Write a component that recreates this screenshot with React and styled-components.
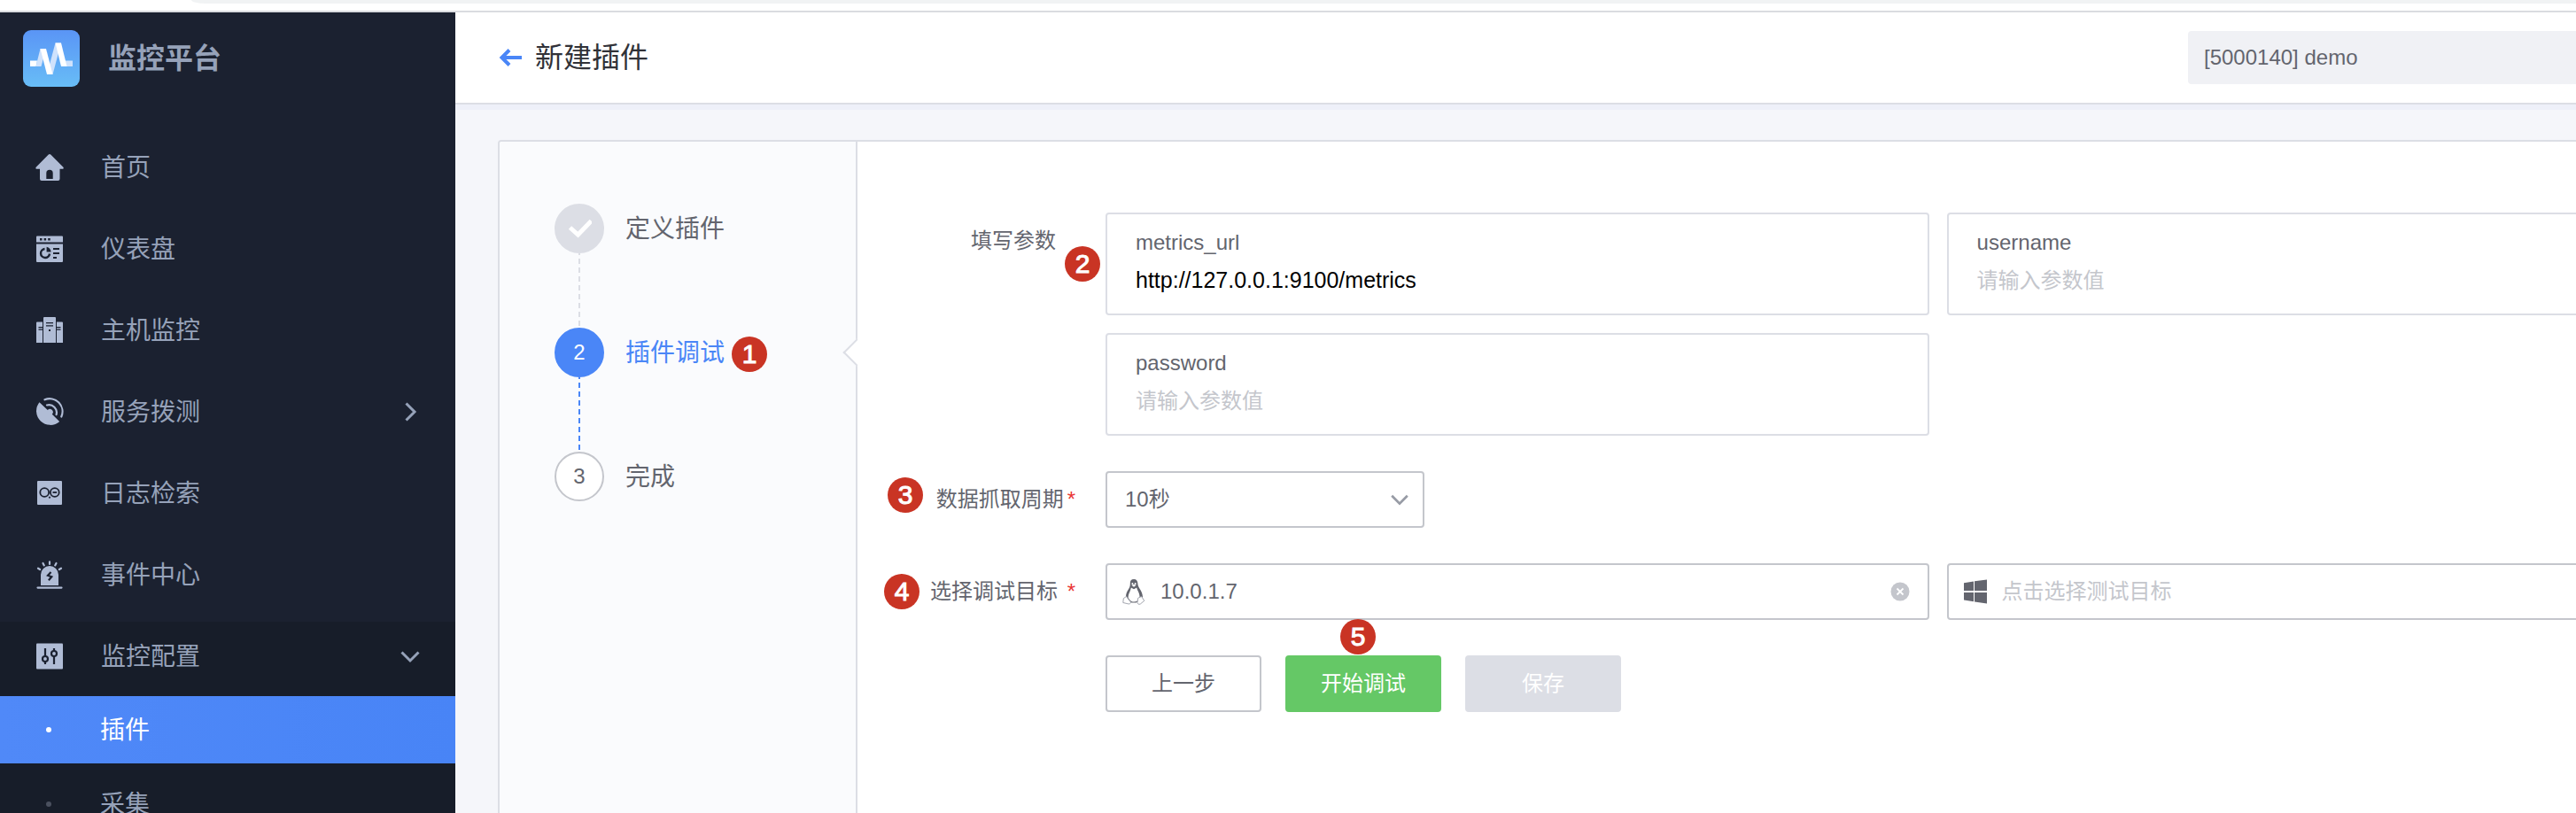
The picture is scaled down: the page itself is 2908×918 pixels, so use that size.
import React from "react";
import styled, { createGlobalStyle, css } from "styled-components";

const sans = '"Liberation Sans", "Noto Sans CJK SC", sans-serif';

const GlobalStyle = createGlobalStyle`
  *, *::before, *::after { box-sizing: border-box; }
  body {
    margin: 0;
    background: #fff;
    color: #63656e;
    font-family: ${sans};
    font-size: 24px;
    line-height: 32px;
  }
  button, input, select { font: inherit; color: inherit; margin: 0; }
  a { color: inherit; text-decoration: none; }
  svg { display: block; flex: none; }
`;

const Page = styled.div`
  display: flex;
  flex-direction: column;
  height: 100vh;
  overflow: hidden;
`;

const BrowserEdge = styled.div`
  flex: none;
  height: 14px;
  padding-left: 216px;
  border-bottom: 2px solid #dadce0;
  background: #fff;
`;

const AddressBar = styled.div`
  height: 4px;
  border-bottom-left-radius: 16px 4px;
  background: #f1f3f4;
`;

const Shell = styled.div`
  display: flex;
  flex: 1;
  min-height: 0;
`;

/* ---------- sidebar ---------- */

const Sidebar = styled.aside`
  flex: none;
  width: 514px;
  overflow: hidden;
  background: #1b2130;
  color: #96a2b9;
  font-size: 28px;
  line-height: 40px;
`;

const Brand = styled.div`
  display: flex;
  align-items: center;
  gap: 32px;
  height: 104px;
  padding-left: 26px;
  font-size: 32px;
  font-weight: 700;
`;

const Nav = styled.nav`
  padding-top: 24px;
`;

const navRow = css`
  display: flex;
  align-items: center;
  width: 100%;
  gap: 42px;
  padding: 0 38px 0 40px;
  border: 0;
  background: none;
  text-align: left;
`;

const navItem = css`
  ${navRow}
  height: 84px;
  padding-bottom: 6px;
`;

const NavLink = styled.a`
  ${navItem}
  margin-top: 8px;
`;

const NavToggle = styled.button`
  ${navItem}
  margin-top: ${(p) => (p.$flush ? 0 : "8px")};
`;

const NavText = styled.span`
  flex: 1;
  padding-top: 2px;
`;

const NavGroup = styled.div`
  margin-top: 8px;
  padding-bottom: 8px;
  background: #171d29;
`;

const SubLink = styled.a`
  ${navRow}
  height: 76px;
  margin-bottom: 8px;
  ${(p) =>
    p.$active &&
    css`
      background: linear-gradient(90deg, #5089f8, #4884f6);
      color: #fff;
    `}
`;

const SubDot = styled.span`
  flex: none;
  width: 6px;
  height: 6px;
  margin: 0 13px 0 12px;
  border-radius: 50%;
  background: ${(p) => (p.$active ? "#fff" : "#4a505e")};
`;

/* ---------- main area ---------- */

const Main = styled.main`
  display: flex;
  flex: 1;
  flex-direction: column;
  min-width: 0;
  background: #f5f6fa;
`;

const Header = styled.header`
  display: flex;
  flex: none;
  align-items: center;
  height: 104px;
  padding-left: 48px;
  border-bottom: 2px solid #dcdee5;
  background: #fff;
  box-shadow: 0 6px 0 #eef0f9;
`;

const BackLink = styled.a`
  display: flex;
  margin-right: 14px;
`;

const Title = styled.h1`
  flex: 1;
  margin: 0;
  color: #313238;
  font-size: 32px;
  font-weight: 400;
  line-height: 40px;
`;

const SpaceSelect = styled.select`
  width: 438px;
  height: 60px;
  padding: 0 18px;
  border: 0;
  border-radius: 4px 0 0 4px;
  background: #f0f1f5;
  appearance: none;
`;

const Card = styled.section`
  display: flex;
  flex: 1;
  min-height: 0;
  margin: 40px 0 0 48px;
  border: 2px solid #dcdee5;
  border-width: 2px 0 0 2px;
  border-top-left-radius: 4px;
  background: #fff;
  overflow: hidden;
`;

const StepsPane = styled.div`
  flex: none;
  width: 402px;
  padding: 70px 0 0 62px;
  background: #fafbfd;
`;

const StepList = styled.ol`
  display: flex;
  flex-direction: column;
  margin: 0;
  padding: 0;
  list-style: none;
`;

const Step = styled.li`
  position: relative;
  display: flex;
  gap: 24px;
  color: ${(p) => (p.$state === "active" ? "#4a86f7" : "#63656e")};
`;

const StepRail = styled.div`
  display: flex;
  flex-direction: column;
  align-items: center;
`;

const StepMark = styled.span`
  display: flex;
  align-items: center;
  justify-content: center;
  width: 56px;
  height: 56px;
  border: 2px solid #c4c6cc;
  border-radius: 50%;
  background: #fff;
  ${(p) =>
    p.$state === "done" &&
    css`
      border-color: #dcdee5;
      background: #dcdee5;
    `}
  ${(p) =>
    p.$state === "active" &&
    css`
      border-color: #4a86f7;
      background: #4a86f7;
      color: #fff;
    `}
`;

const StepLine = styled.span`
  width: 2px;
  height: 84px;
  background: repeating-linear-gradient(
    ${(p) => (p.$state === "active" ? "#4a86f7" : "#dcdee5")} 0 2px,
    transparent 2px 6px,
    ${(p) => (p.$state === "active" ? "#4a86f7" : "#dcdee5")} 6px 10px
  );
`;

const StepLabel = styled.span`
  position: relative;
  height: 56px;
  font-size: 28px;
  line-height: 58px;
`;

const Notch = styled.span`
  position: absolute;
  top: 17px;
  right: -12px;
  width: 22px;
  height: 22px;
  border: 2px solid #dcdee5;
  border-width: 0 0 2px 2px;
  background: #fff;
  transform: rotate(45deg);
`;

/* numbered call-outs lying over the form */
const Callout = styled.span`
  position: absolute;
  top: ${(p) => p.$top};
  left: ${(p) => p.$left};
  width: 40px;
  height: 40px;
  border-radius: 50%;
  background: #c93424;
  color: #fff;
  font-size: 30px;
  -webkit-text-stroke: 1px #fff;
  line-height: 40px;
  text-align: center;
`;

const Form = styled.form`
  display: flex;
  flex: 1;
  flex-direction: column;
  gap: 40px;
  min-width: 0;
  padding-top: 80px;
  border-left: 2px solid #dcdee5;
`;

const Row = styled.div`
  display: flex;
`;

const RowLabel = styled.label`
  position: relative;
  flex: none;
  width: 280px;
  padding-right: ${(p) => (p.$required ? "34px" : "56px")};
  line-height: 64px;
  text-align: right;
  white-space: pre;
`;

const Star = styled.span`
  margin-left: 4px;
  color: #ea3636;
`;

const FieldGrid = styled.div`
  display: grid;
  flex: 1;
  grid-template-columns: 56% 56%;
  gap: 20px;
  min-width: 0;
`;

const ParamBox = styled.label`
  display: flex;
  flex-direction: column;
  gap: 10px;
  padding: 16px 32px 22px;
  border: 2px solid #dcdee5;
  border-radius: 4px;
`;

const bareInput = css`
  width: 100%;
  min-width: 0;
  height: 32px;
  padding: 0;
  border: 0;
  outline: 0;
  background: none;
  &::placeholder {
    color: #c4c6cc;
    font-size: 24px;
    opacity: 1;
  }
`;

const ParamInput = styled.input`
  ${bareInput}
  color: #000;
  font-size: 25px;
`;

const SelectWrap = styled.div`
  display: grid;
  align-items: center;
  width: 360px;
  & > * { grid-area: 1 / 1; }
  & > svg {
    justify-self: end;
    margin-right: 16px;
    pointer-events: none;
  }
`;

const PeriodSelect = styled.select`
  width: 100%;
  height: 64px;
  padding: 0 20px;
  border: 2px solid #c4c6cc;
  border-radius: 4px;
  background: #fff;
  appearance: none;
`;

const TargetBox = styled.div`
  display: flex;
  align-items: center;
  gap: 16px;
  height: 64px;
  padding: 0 20px 0 16px;
  border: 2px solid #c4c6cc;
  border-radius: 4px;
`;

const TargetInput = styled.input`
  ${bareInput}
`;

const ClearButton = styled.button`
  display: flex;
  padding: 0;
  border: 0;
  background: none;
`;

const Actions = styled.div`
  position: relative;
  display: flex;
  gap: 27px;
  padding-left: 280px;
`;

const Button = styled.button`
  width: 176px;
  height: 64px;
  padding: 0;
  border: 2px solid #c4c6cc;
  border-radius: 4px;
  background: #fff;
  ${(p) =>
    p.$kind === "success" &&
    css`
      border-color: #65c866;
      background: #65c866;
      color: #fff;
    `}
  &:disabled {
    border-color: #dcdee5;
    background: #dcdee5;
    color: #fff;
  }
`;

/* ---------- drawings ---------- */

const INK = "#b0bcd5";
const HOLE = "#1b2130";

const Logo = () => (
  <svg width="64" height="64" viewBox="0 0 64 64" aria-hidden="true">
    <defs>
      <linearGradient id="logo-bg" x1="0" y1="0" x2="0" y2="1">
        <stop offset="0" stopColor="#5a95f6" />
        <stop offset="1" stopColor="#68bdf6" />
      </linearGradient>
    </defs>
    <rect width="64" height="64" rx="9" fill="url(#logo-bg)" />
    <path d="M14.500 41 19.500 21H26L20.500 41Z" fill="#cfe2fc" />
    <path d="M27 50 36.500 14.500H43L33.500 50Z" fill="#cfe2fc" />
    <path d="M43 34.500H56V41H43Z" fill="#cfe2fc" />
    <path d="M8 34.500H16L14.500 41H8Z" fill="#fff" />
    <path d="M19.500 21H26L33.500 50H27Z" fill="#fff" />
    <path d="M36.500 14.500H43L49.500 41H43Z" fill="#fff" />
  </svg>
);

const Icon = ({ children }) => (
  <svg width="32" height="32" viewBox="0 0 32 32" fill={INK} aria-hidden="true">
    {children}
  </svg>
);

const HomeIcon = () => (
  <Icon>
    <path d="M14.800 1.500a1.700 1.700 0 0 1 2.400 0L31.400 15.800c.7.800.3 1.900-.8 1.900H27.500V29a2 2 0 0 1-2 2h-18.500a2 2 0 0 1-2-2V17.700H1.500C.4 17.700 0 16.600.7 15.800Z" />
    <path d="M12.300 29V22.500a3.700 3.700 0 0 1 7.400 0V29Z" fill={HOLE} />
  </Icon>
);

const DashboardIcon = () => (
  <Icon>
    <path d="M2 1.500h28a1 1 0 0 1 1 1V8.500H1V2.500a1 1 0 0 1 1-1ZM1 10.500H31V30a1 1 0 0 1-1 1H2a1 1 0 0 1-1-1Z" />
    <path d="M5 4h2.500v2.500H5ZM9.600 4h2.500v2.500H9.600ZM14.200 4h2.500v2.500h-2.500Z" fill={HOLE} />
    <path d="M10.500 16a5 5 0 1 0 5.500 5.500" fill="none" stroke={HOLE} strokeWidth="2.400" />
    <path d="M12.600 13.800a6.500 6.500 0 0 1 5 5.800h-5ZM20 15h7v2h-7ZM20 20h7v2h-7ZM20 25h4v2h-4Z" fill={HOLE} />
  </Icon>
);

const HostIcon = () => (
  <Icon>
    <path d="M10 1h12a1 1 0 0 1 1 1V30H9V2a1 1 0 0 1 1-1ZM2 6.500h6V30H1V7.500a1 1 0 0 1 1-1ZM24 6.500h6a1 1 0 0 1 1 1V30h-7Z" />
    <path d="M12 7h8v1.300h-8ZM12 10.200h8v1.300h-8ZM15 15h2v2h-2ZM3.500 12h4.500v1.200H3.500ZM3.500 14.600h4.500v1.200H3.500ZM24 12h4.500v1.200H24ZM24 14.600h4.500v1.200H24Z" fill={HOLE} />
  </Icon>
);

const RadarIcon = () => (
  <Icon>
    <path d="M4.500 5.200 13.800 14a3.400 3.400 0 0 1 5 4.700l8.400 8.300A15.800 15.800 0 0 1 4.500 5.200Z" />
    <path d="M10.500 2.300A14.500 14.500 0 0 1 29.300 21.500M13 8.500a8.600 8.600 0 0 1 10.600 10.600" fill="none" stroke={INK} strokeWidth="2.200" strokeLinecap="round" />
  </Icon>
);

const LogIcon = () => (
  <Icon>
    <rect x="2" y="2" width="28" height="27" rx="1" />
    <g fill="none" stroke={HOLE} strokeWidth="1.800">
      <circle cx="10.200" cy="15" r="4.900" />
      <circle cx="21.800" cy="15" r="4.900" />
      <path d="M19.500 15h4.600" />
    </g>
    <path d="M16 19.300 17.300 20.700 16 22 14.700 20.700Z" fill={HOLE} />
  </Icon>
);

const AlarmIcon = () => (
  <Icon>
    <path d="M6 28V16a10 10 0 0 1 20 0V28ZM2.500 29.500h27a1 1 0 0 1 0 2.200h-27a1 1 0 0 1 0-2.200Z" />
    <path d="M16 1.400v2.500M8.500 3l1.300 2.400M23.500 3l-1.300 2.400M3 8.700l2.200 1.300M29 8.700 26.800 10" stroke={INK} strokeWidth="2.200" strokeLinecap="round" />
    <path d="M17.500 13 14 16.700l4.300 1.600-3.400 4" fill="none" stroke={HOLE} strokeWidth="2.200" />
  </Icon>
);

const ConfigIcon = () => (
  <Icon>
    <rect x="1" y="1.500" width="30" height="29" rx="1" />
    <g fill="none" stroke={HOLE} strokeWidth="2.200">
      <circle cx="11" cy="19" r="3" />
      <circle cx="21" cy="13" r="3" />
      <path d="M11 7v9M11 22v3M21 7v3M21 16v9" />
    </g>
  </Icon>
);

const Chevron = ({ down, color = "#96a2b9", size = 26, stroke = 3 }) => (
  <svg width={size} height={size} viewBox="0 0 26 26" fill="none" stroke={color} strokeWidth={stroke} aria-hidden="true">
    <path d={down ? "M3.500 8.500 13 18l9.500-9.500" : "M8.500 3.500 18 13l-9.500 9.500"} />
  </svg>
);

const BackArrow = () => (
  <svg width="28" height="28" viewBox="0 0 28 28" fill="none" stroke="#4a86f7" strokeWidth="4" aria-hidden="true">
    <path d="M27 14H5M13 5.500 4.500 14 13 22.500" />
  </svg>
);

const CheckMark = () => (
  <svg width="28" height="28" viewBox="0 0 28 28" fill="none" stroke="#fff" strokeWidth="5" aria-hidden="true">
    <path d="M3.500 13 12.500 21 27.500 5.500" />
  </svg>
);

const LinuxIcon = () => (
  <svg width="28" height="32" viewBox="0 0 28 32" aria-hidden="true">
    <path d="M9.800 7.500C9.600 3.800 11 2 14 2s4.400 2 4.400 5c0 4.500 5.300 8 5.600 15l-3 3.500-4.500 3h-5L6.500 24.500 5 21.500C5.300 15 10 12.500 9.800 7.500Z" fill="#63656e" />
    <path d="M10.800 11.500 14 13.200l3.200-1.700c.8 3.800 3.800 6.500 3.300 11.500-1.200 3.300-3.600 4.600-6.500 4.600-3.300 0-5-2.500-6.300-4.600-.3-4.500 2.500-7 3.100-11.500Z" fill="#fff" />
    <path d="M11.300 8.800 14 7.800l2.700 1-2.700 2Z" fill="#fff" />
    <circle cx="12.400" cy="7" r="1" fill="#fff" />
    <circle cx="15.600" cy="7" r="1" fill="#fff" />
    <path d="M5.500 21.500 10.500 28c0 1.600-1.600 2.400-3.600 1.700L1.800 28.500l.5-4.800ZM22.500 21.500l3.300 4.800-4.500 3.700c-1.800.8-3.300 0-3.300-1.700l.7-5Z" fill="#fff" stroke="#979ba5" strokeWidth=".9" />
  </svg>
);

const WindowsIcon = () => (
  <svg width="28" height="28" viewBox="0 0 28 28" fill="#63656e" aria-hidden="true">
    <path d="M1 4.300 12 2.500V13H1ZM13 2.300 27 .5V13H13ZM1 15H12V25.300L1 23.500ZM13 15H27V27.500L13 25.500Z" />
  </svg>
);

const ClearIcon = () => (
  <svg width="22" height="22" viewBox="0 0 22 22" aria-hidden="true">
    <circle cx="11" cy="11" r="10.500" fill="#c4c6cc" />
    <path d="M7.500 7.500 14.500 14.500M14.500 7.500 7.500 14.500" stroke="#fff" strokeWidth="1.800" />
  </svg>
);

/* ---------- data ---------- */

const navItems = [
  { text: "首页", icon: HomeIcon },
  { text: "仪表盘", icon: DashboardIcon },
  { text: "主机监控", icon: HostIcon },
  { text: "服务拨测", icon: RadarIcon, expandable: true },
  { text: "日志检索", icon: LogIcon },
  { text: "事件中心", icon: AlarmIcon },
];

const steps = [
  { label: "定义插件", state: "done" },
  { label: "插件调试", state: "active" },
  { label: "完成", state: "todo" },
];

const params = [
  { name: "metrics_url", value: "http://127.0.0.1:9100/metrics" },
  { name: "username" },
  { name: "password" },
];

export default function App() {
  return (
    <>
      <GlobalStyle />
      <Page>
        <BrowserEdge>
          <AddressBar />
        </BrowserEdge>
        <Shell>
          <Sidebar>
            <Brand>
              <Logo />
              <span>监控平台</span>
            </Brand>
            <Nav>
              {navItems.map(({ text, icon: Glyph, expandable }) =>
                expandable ? (
                  <NavToggle key={text} type="button" aria-expanded="false">
                    <Glyph />
                    <NavText>{text}</NavText>
                    <Chevron />
                  </NavToggle>
                ) : (
                  <NavLink key={text} href="#">
                    <Glyph />
                    <NavText>{text}</NavText>
                  </NavLink>
                )
              )}
              <NavGroup>
                <NavToggle type="button" aria-expanded="true" $flush>
                  <ConfigIcon />
                  <NavText>监控配置</NavText>
                  <Chevron down />
                </NavToggle>
                <SubLink href="#" $active>
                  <SubDot $active />
                  <NavText>插件</NavText>
                </SubLink>
                <SubLink href="#">
                  <SubDot />
                  <NavText>采集</NavText>
                </SubLink>
              </NavGroup>
            </Nav>
          </Sidebar>

          <Main>
            <Header>
              <BackLink href="#" aria-label="返回">
                <BackArrow />
              </BackLink>
              <Title>新建插件</Title>
              <SpaceSelect aria-label="业务">
                <option>[5000140] demo</option>
              </SpaceSelect>
            </Header>

            <Card>
              <StepsPane>
                <StepList>
                  {steps.map(({ label, state }, i) => (
                    <Step key={label} $state={state}>
                      <StepRail>
                        <StepMark $state={state}>
                          {state === "done" ? <CheckMark /> : i + 1}
                        </StepMark>
                        {i < steps.length - 1 && <StepLine $state={state} />}
                      </StepRail>
                      <StepLabel>
                        {label}
                        {state === "active" && (
                          <Callout $top="10px" $left="calc(100% + 8px)">1</Callout>
                        )}
                      </StepLabel>
                      {state === "active" && <Notch />}
                    </Step>
                  ))}
                </StepList>
              </StepsPane>

              <Form onSubmit={(e) => e.preventDefault()}>
                <Row>
                  <RowLabel as="div">
                    填写参数
                    <Callout $top="38px" $left="234px">2</Callout>
                  </RowLabel>
                  <FieldGrid>
                    {params.map(({ name, value }) => (
                      <ParamBox key={name}>
                        {name}
                        <ParamInput defaultValue={value} placeholder="请输入参数值" />
                      </ParamBox>
                    ))}
                  </FieldGrid>
                </Row>

                <Row>
                  <RowLabel htmlFor="period" $required>
                    <Callout $top="7px" $left="34px">3</Callout>
                    数据抓取周期<Star>*</Star>
                  </RowLabel>
                  <SelectWrap>
                    <PeriodSelect id="period">
                      <option>10秒</option>
                    </PeriodSelect>
                    <Chevron down color="#979ba5" size={24} />
                  </SelectWrap>
                </Row>

                <Row>
                  <RowLabel htmlFor="target-linux" $required>
                    <Callout $top="12px" $left="30px">4</Callout>
                    {"选择调试目标 "}<Star>*</Star>
                  </RowLabel>
                  <FieldGrid>
                    <TargetBox>
                      <LinuxIcon />
                      <TargetInput id="target-linux" defaultValue="10.0.1.7" />
                      <ClearButton type="button" aria-label="清除">
                        <ClearIcon />
                      </ClearButton>
                    </TargetBox>
                    <TargetBox>
                      <WindowsIcon />
                      <TargetInput aria-label="Windows" placeholder="点击选择测试目标" />
                    </TargetBox>
                  </FieldGrid>
                </Row>

                <Actions>
                  <Button type="button">上一步</Button>
                  <Button type="submit" $kind="success">开始调试</Button>
                  <Button type="button" disabled>保存</Button>
                  <Callout $top="-41px" $left="545px">5</Callout>
                </Actions>
              </Form>
            </Card>
          </Main>
        </Shell>
      </Page>
    </>
  );
}
